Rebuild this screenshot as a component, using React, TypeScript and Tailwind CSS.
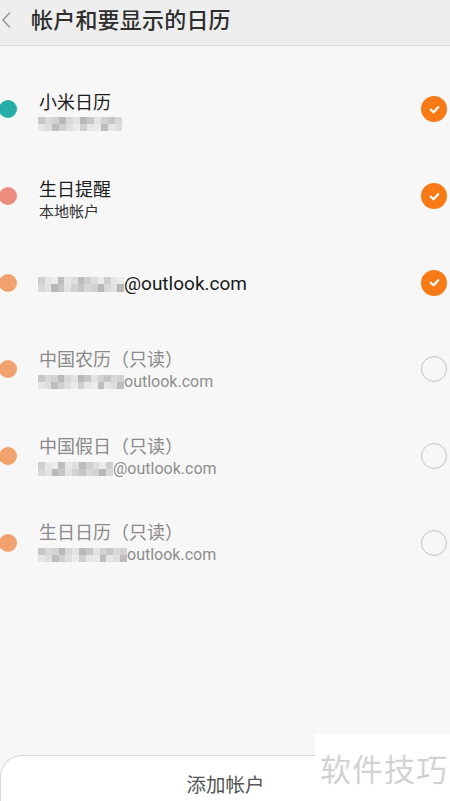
import React from "react";

const CJK = { fontFamily: '"Noto Sans CJK SC", "Noto Sans", sans-serif' };
const LAT = { fontFamily: 'Roboto, "Noto Sans CJK SC", sans-serif' };

const grays = ["#cfcfcf", "#e2e2e2", "#bdbdbd", "#d8d8d8", "#ebebeb", "#c6c6c6", "#dedede", "#b8b8b8", "#e6e6e6", "#d2d2d2"];

function Mosaic({ width, seed, height = 14 }: { width: number; seed: number; height?: number }) {
  const cols = Math.ceil(width / 7);
  const cells: string[] = [];
  for (let r = 0; r < 2; r++) {
    for (let c = 0; c < cols; c++) {
      cells.push(grays[(c * 7 + r * 3 + seed * 5 + ((c * c) % 4)) % grays.length]);
    }
  }
  return (
    <div
      className="grid blur-[0.6px] shrink-0"
      style={{ width, height, gridTemplateColumns: `repeat(${cols}, 1fr)` }}
    >
      {cells.map((g, i) => (
        <div key={i} style={{ background: g }} />
      ))}
    </div>
  );
}

function Dot({ color }: { color: string }) {
  return <div className="w-[18px] h-[18px] rounded-full ml-[-1px] shrink-0" style={{ background: color }} />;
}

function Checked() {
  return (
    <div className="w-[26px] h-[26px] rounded-full bg-[#f77a16] flex items-center justify-center shrink-0">
      <svg width="13" height="13" viewBox="0 0 14 14">
        <path d="M3 7.3 L6 10 L11 4.5" fill="none" stroke="white" strokeWidth="2.4" strokeLinecap="round" strokeLinejoin="round" />
      </svg>
    </div>
  );
}

function Unchecked() {
  return <div className="w-[26px] h-[26px] rounded-full border-[1.5px] border-[#c4c4c4] shrink-0" />;
}

type Row = {
  color: string;
  title?: string;
  sub?: React.ReactNode;
  single?: React.ReactNode;
  checked: boolean;
  gray?: boolean;
};

const rows: Row[] = [
  { color: "#27aea9", title: "小米日历", sub: <Mosaic width={84} seed={1} />, checked: true },
  { color: "#ec8d80", title: "生日提醒", sub: <span className="ml-[1px] text-[15px]" style={CJK}>本地帐户</span>, checked: true },
  {
    color: "#f2a26e",
    single: (
      <div className="flex items-center">
        <Mosaic width={86} seed={2} height={15} />
        <span style={LAT} className="text-[19px] text-[#1a1a1a]">@outlook.com</span>
      </div>
    ),
    checked: true,
  },
  {
    color: "#f2a26e",
    title: "中国农历（只读）",
    sub: (
      <div className="flex items-center">
        <Mosaic width={86} seed={3} />
        <span style={LAT} className="text-[16px] text-[#8e8e8e]">outlook.com</span>
      </div>
    ),
    checked: false,
    gray: true,
  },
  {
    color: "#f2a26e",
    title: "中国假日（只读）",
    sub: (
      <div className="flex items-center">
        <Mosaic width={75} seed={4} />
        <span style={LAT} className="text-[16px] text-[#8e8e8e]">@outlook.com</span>
      </div>
    ),
    checked: false,
    gray: true,
  },
  {
    color: "#f2a26e",
    title: "生日日历（只读）",
    sub: (
      <div className="flex items-center">
        <Mosaic width={89} seed={5} />
        <span style={LAT} className="text-[16px] text-[#8e8e8e]">outlook.com</span>
      </div>
    ),
    checked: false,
    gray: true,
  },
];

export default function App() {
  return (
    <div className="relative w-[450px] h-[801px] overflow-hidden bg-[#f7f7f7] flex flex-col" style={CJK}>
      <div className="h-[46px] bg-[#eeeeee] border-b border-[#dcdcdc] flex items-center shrink-0">
        <svg width="12" height="18" viewBox="0 0 12 18" className="ml-[1px] mt-[-6px]">
          <path d="M9 1.5 L2 9 L9 16.5" fill="none" stroke="#9a9a9a" strokeWidth="1.6" />
        </svg>
        <span className="ml-[18px] mt-[-8px] text-[22px] font-medium text-[#2e2e2e] tracking-[0.2px]">帐户和要显示的日历</span>
      </div>

      <div className="pt-[20px] flex flex-col">
        {rows.map((r, i) => (
          <div key={i} className="h-[86.7px] flex items-center pr-[3px]">
            <Dot color={r.color} />
            <div className="flex-1 ml-[21px] flex flex-col">
              {r.single ? (
                <div className="mt-[3px]">{r.single}</div>
              ) : (
                <div className={`flex flex-col ${r.gray ? "" : "pt-[6px]"}`}>
                  <span
                    className={`h-[24px] leading-[24px] ml-[1px] ${r.gray ? "text-[18px] text-[#8a8a8a]" : "text-[18px] text-[#1c1c1c]"}`}
                  >
                    {r.title}
                  </span>
                  <div className={`h-[22px] flex items-center text-[#333] ${r.gray ? "mt-[1px]" : ""}`}>{r.sub}</div>
                </div>
              )}
            </div>
            {r.checked ? <Checked /> : <Unchecked />}
          </div>
        ))}
      </div>

      <div className="flex-1" />

      <div className="h-[46px] bg-white border-t border-l border-[#d8d8d8] rounded-tl-[22px] flex items-center justify-center shrink-0">
        <span className="text-[19.5px] text-[#555] mt-[11px]">添加帐户</span>
      </div>

      <div className="absolute left-[315px] top-[734px] w-[135px] h-[67px] bg-white flex items-start">
        <span className="ml-[5px] mt-[14px] text-[31px] leading-[40px] text-[#d2d2d2] tracking-[1px]">软件技巧</span>
      </div>
    </div>
  );
}
